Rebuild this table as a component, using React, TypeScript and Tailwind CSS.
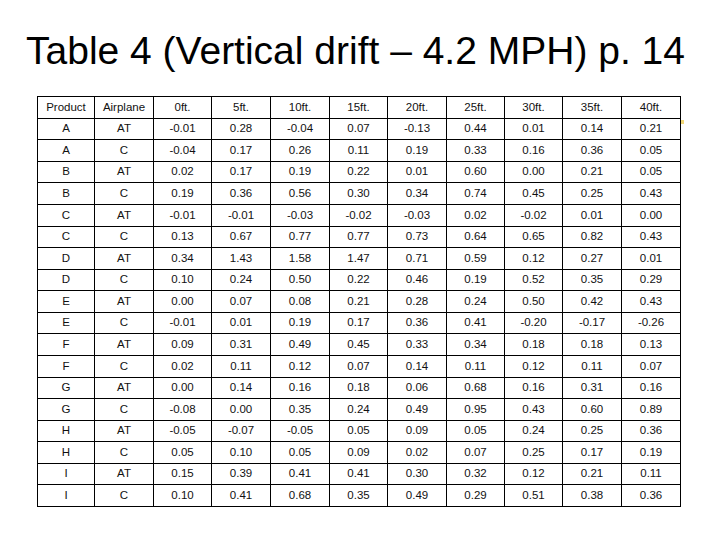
import React from "react";

const headers = ["Product", "Airplane", "0ft.", "5ft.", "10ft.", "15ft.", "20ft.", "25ft.", "30ft.", "35ft.", "40ft."];

const rows: string[][] = [
  ["A", "AT", "-0.01", "0.28", "-0.04", "0.07", "-0.13", "0.44", "0.01", "0.14", "0.21"],
  ["A", "C", "-0.04", "0.17", "0.26", "0.11", "0.19", "0.33", "0.16", "0.36", "0.05"],
  ["B", "AT", "0.02", "0.17", "0.19", "0.22", "0.01", "0.60", "0.00", "0.21", "0.05"],
  ["B", "C", "0.19", "0.36", "0.56", "0.30", "0.34", "0.74", "0.45", "0.25", "0.43"],
  ["C", "AT", "-0.01", "-0.01", "-0.03", "-0.02", "-0.03", "0.02", "-0.02", "0.01", "0.00"],
  ["C", "C", "0.13", "0.67", "0.77", "0.77", "0.73", "0.64", "0.65", "0.82", "0.43"],
  ["D", "AT", "0.34", "1.43", "1.58", "1.47", "0.71", "0.59", "0.12", "0.27", "0.01"],
  ["D", "C", "0.10", "0.24", "0.50", "0.22", "0.46", "0.19", "0.52", "0.35", "0.29"],
  ["E", "AT", "0.00", "0.07", "0.08", "0.21", "0.28", "0.24", "0.50", "0.42", "0.43"],
  ["E", "C", "-0.01", "0.01", "0.19", "0.17", "0.36", "0.41", "-0.20", "-0.17", "-0.26"],
  ["F", "AT", "0.09", "0.31", "0.49", "0.45", "0.33", "0.34", "0.18", "0.18", "0.13"],
  ["F", "C", "0.02", "0.11", "0.12", "0.07", "0.14", "0.11", "0.12", "0.11", "0.07"],
  ["G", "AT", "0.00", "0.14", "0.16", "0.18", "0.06", "0.68", "0.16", "0.31", "0.16"],
  ["G", "C", "-0.08", "0.00", "0.35", "0.24", "0.49", "0.95", "0.43", "0.60", "0.89"],
  ["H", "AT", "-0.05", "-0.07", "-0.05", "0.05", "0.09", "0.05", "0.24", "0.25", "0.36"],
  ["H", "C", "0.05", "0.10", "0.05", "0.09", "0.02", "0.07", "0.25", "0.17", "0.19"],
  ["I", "AT", "0.15", "0.39", "0.41", "0.41", "0.30", "0.32", "0.12", "0.21", "0.11"],
  ["I", "C", "0.10", "0.41", "0.68", "0.35", "0.49", "0.29", "0.51", "0.38", "0.36"],
];

const Cell: React.FC<{ children: React.ReactNode }> = ({ children }) => (
  <div className="flex items-center justify-center border-r border-b border-black text-[11.5px] text-[#111] leading-none">
    {children}
  </div>
);

export default function App() {
  return (
    <div className="w-[720px] h-[540px] bg-white pt-[31px] font-['Liberation_Sans',Arial,sans-serif]">
      <h1 className="ml-[26px] text-[39px] leading-[39px] text-black font-normal whitespace-nowrap">
        Table 4 (Vertical drift – 4.2 MPH) p. 14
      </h1>

      <div className="relative mt-[26px] ml-[37px] w-[644px]">
        <div className="grid grid-cols-[57px_59px_58px_59px_59px_58px_59px_58px_58px_59px_59px] grid-rows-[22px_21px_22px_21px_22px_22px_21px_22px_21px_22px_21px_22px_22px_21px_22px_21px_22px_21px_22px] border-t border-l border-black">
          {headers.map((h) => (
            <Cell key={h}>{h}</Cell>
          ))}
          {rows.map((r, i) =>
            r.map((v, j) => <Cell key={`${i}-${j}`}>{v}</Cell>)
          )}
        </div>
        <div className="absolute left-[644px] top-[24px] w-[3px] h-[4px] bg-[#f2d878]" />
      </div>
    </div>
  );
}
